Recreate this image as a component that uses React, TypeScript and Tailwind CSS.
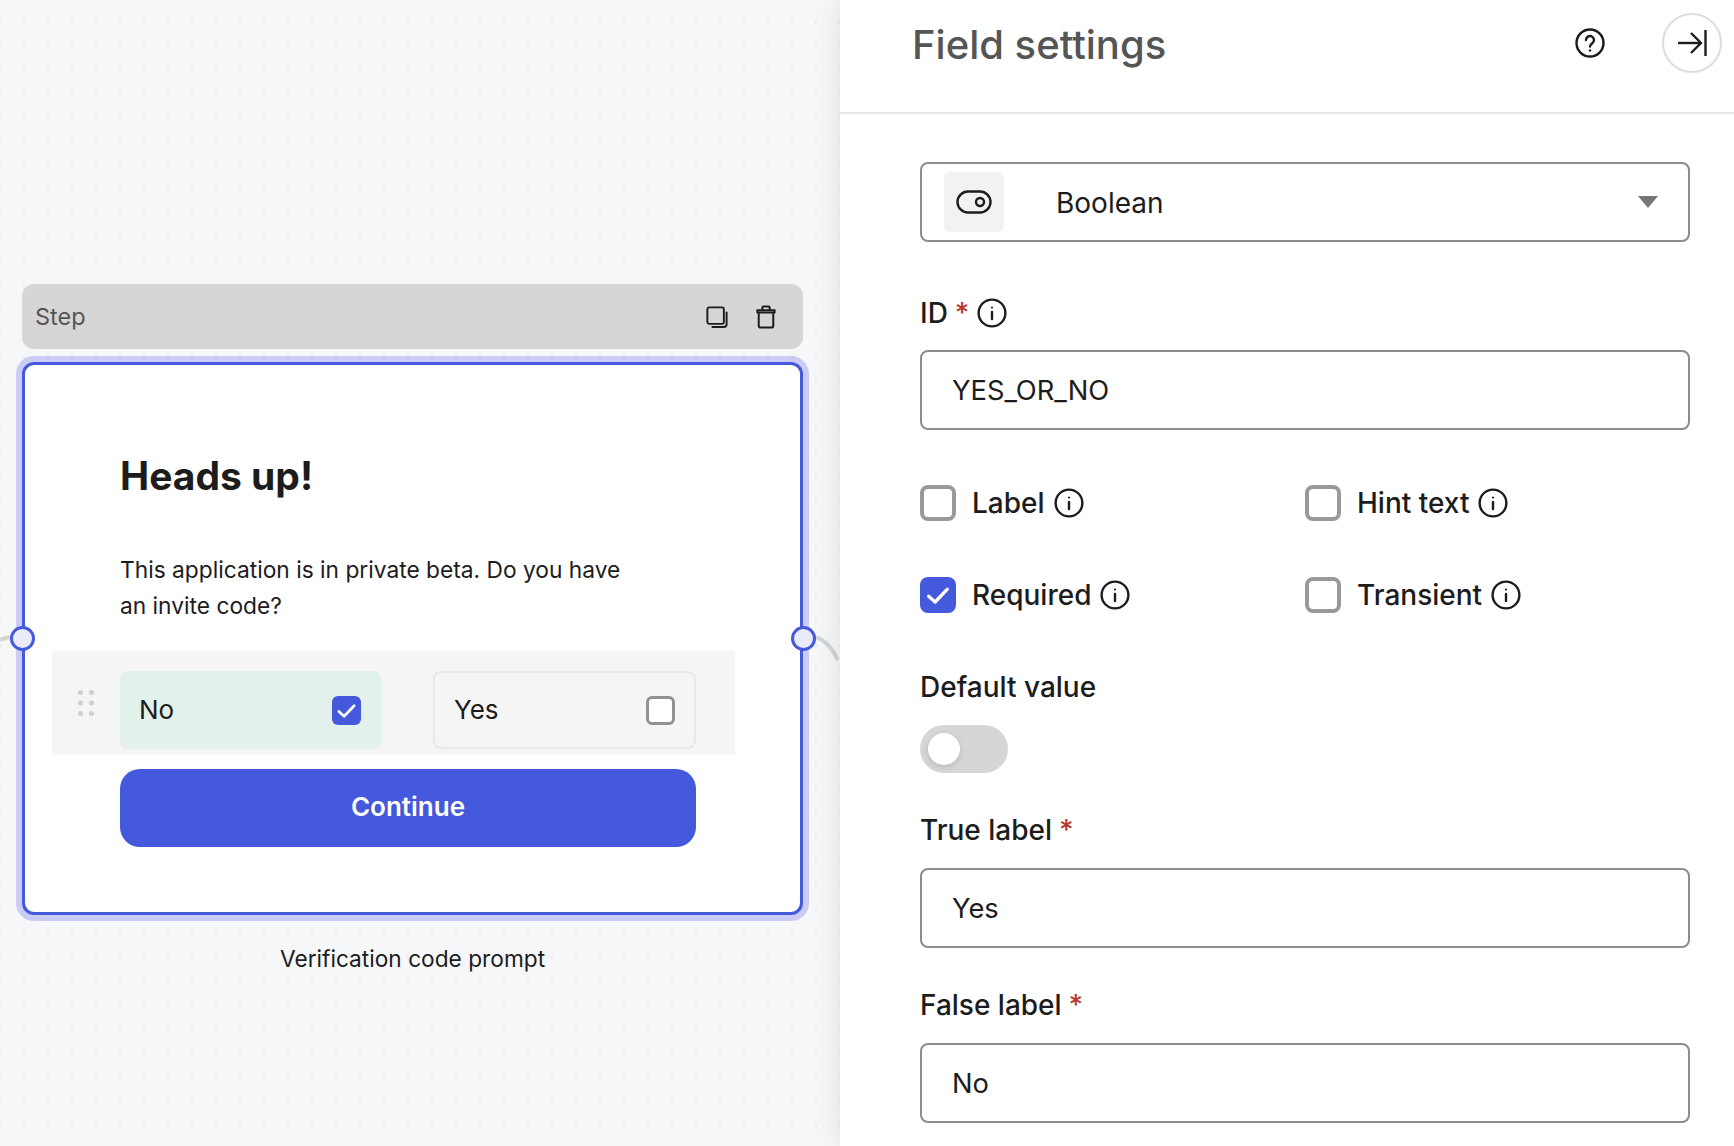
// Field settings editor: canvas preview on the left, settings panel on the right

function InfoIcon() {
  return (
    <svg width="30" height="30" viewBox="0 0 30 30" fill="none" stroke="#1c1c1c" strokeWidth="2.4" strokeLinecap="round" className="shrink-0">
      <circle cx="15" cy="15" r="13.4" />
      <path d="M15 14v7" />
      <circle cx="15" cy="9.5" r="1.1" fill="#1c1c1c" stroke="none" />
    </svg>
  );
}

function Check({ size }: { size: number }) {
  return (
    <svg width={size} height={size} viewBox="0 0 24 24" fill="none" stroke="#ffffff" strokeWidth="2.8" strokeLinecap="round" strokeLinejoin="round">
      <path d="M4 13l5.5 5L20 7" />
    </svg>
  );
}

function FieldLabel({ text, required, info }: { text: string; required?: boolean; info?: boolean }) {
  return (
    <div className="flex items-center h-8 text-[28px] leading-8 font-medium text-[#1c1c1c]">
      <span>{text}</span>
      {required && <span className="ml-[7px] text-[#b8352c]">*</span>}
      {info && <span className="ml-[8px] flex"><InfoIcon /></span>}
    </div>
  );
}

function TextInput({ value }: { value: string }) {
  return (
    <div className="flex items-center h-[80px] pl-[30px] pt-[2px] border-2 border-[#8c8c8c] rounded-lg text-[27.3px] text-[#1c1c1c]">
      {value}
    </div>
  );
}

function CheckOption({ label, checked }: { label: string; checked?: boolean }) {
  return (
    <div className="flex items-center h-9 w-[385px]">
      {checked ? (
        <div className="flex items-center justify-center w-9 h-9 rounded-lg bg-[#4459dc]">
          <Check size={28} />
        </div>
      ) : (
        <div className="w-9 h-9 rounded-lg border-4 border-[#999999]" />
      )}
      <span className="ml-[16px] text-[28px] font-medium text-[#1c1c1c]">{label}</span>
      <span className="ml-[9px] flex"><InfoIcon /></span>
    </div>
  );
}

function ChoiceCard({ label, selected }: { label: string; selected?: boolean }) {
  return (
    <div
      className={
        selected
          ? 'flex items-center justify-between w-[261px] h-[78px] pl-[19px] pr-5 rounded-lg bg-[#e3f1ec]'
          : 'flex items-center justify-between w-[263px] h-[78px] pl-[19px] pr-[19px] rounded-lg border-2 border-[#e8e8e8]'
      }
    >
      <span className="pb-[1px] text-[26px] text-[#1c1c1c]">{label}</span>
      {selected ? (
        <div className="flex items-center justify-center w-[29px] h-[29px] rounded-md bg-[#4459dc]">
          <Check size={23} />
        </div>
      ) : (
        <div className="w-[29px] h-[29px] rounded-md border-[3px] border-[#929292] bg-white" />
      )}
    </div>
  );
}

function DragHandle() {
  return (
    <svg width="16" height="26" viewBox="0 0 16 26" fill="#cfcfd2" className="shrink-0 -mt-[14px]">
      <circle cx="2.5" cy="2.5" r="2.5" />
      <circle cx="13.5" cy="2.5" r="2.5" />
      <circle cx="2.5" cy="13" r="2.5" />
      <circle cx="13.5" cy="13" r="2.5" />
      <circle cx="2.5" cy="23.5" r="2.5" />
      <circle cx="13.5" cy="23.5" r="2.5" />
    </svg>
  );
}

function CanvasPanel() {
  return (
    <div className="relative w-[840px] h-full pt-[284px] pl-[22px] bg-[#f6f7f9] bg-[radial-gradient(#eeeff2_1.6px,transparent_1.8px)] bg-[length:24px_24px] bg-[position:-12px_10px]">
      {/* connector stubs */}
      <svg width="840" height="700" className="absolute left-0 top-0" fill="none" stroke="#d4d4d4" strokeWidth="4">
        <path d="M0 640C4 638 8 637 12 637" />
        <path d="M812 637C824 637 832 648 838 660" />
      </svg>

      <div className="relative flex items-center justify-between w-[781px] h-[65px] pl-[13px] pr-[27px] rounded-xl bg-[#d6d6d6]">
        <span className="text-[23.5px] text-[#555555]">Step</span>
        <div className="flex items-center gap-[28px]">
          <svg width="22" height="22" viewBox="0 0 24 24" fill="none" stroke="#1c1c1c" strokeWidth="2.1" strokeLinejoin="round" strokeLinecap="round">
            <rect x="1.5" y="1.5" width="18" height="18" rx="2" />
            <path d="M22.5 7v13a3 3 0 0 1-3 3H7" />
          </svg>
          <svg width="20" height="24" viewBox="0 0 22 26" fill="none" stroke="#1c1c1c" strokeWidth="2.2" strokeLinejoin="round" strokeLinecap="round">
            <path d="M1.5 8V5.5h19V8" />
            <path d="M7 5V2.5a1 1 0 0 1 1-1h6a1 1 0 0 1 1 1V5" />
            <path d="M3 8h16v14.5a2 2 0 0 1-2 2H5a2 2 0 0 1-2-2z" />
          </svg>
        </div>
      </div>

      <div className="relative mt-[13px] w-[781px] h-[553px] pt-[87px] border-[3px] border-[#4459dc] rounded-xl bg-white shadow-[0_0_0_6px_rgba(90,90,235,0.27)]">
        <div className="absolute -left-[15.5px] top-[261px] w-[25px] h-[25px] rounded-full border-[3px] border-[#4459dc] bg-[#e9ebfa]" />
        <div className="absolute -right-[15.5px] top-[261px] w-[25px] h-[25px] rounded-full border-[3px] border-[#4459dc] bg-[#e9ebfa]" />

        <h1 className="ml-[95px] text-[39px] leading-[48px] font-bold text-[#1c1c1c]">Heads up!</h1>
        <p className="ml-[95px] mt-[52px] w-[530px] text-[22.75px] leading-9 text-[#1c1c1c]">
          This application is in private beta. Do you have an invite code?
        </p>

        <div className="flex items-center ml-[27px] mt-[27px] w-[683px] h-[104px] pl-[26px] pt-[14px] bg-[#f5f5f5]">
          <DragHandle />
          <div className="flex ml-[26px] gap-[52px]">
            <ChoiceCard label="No" selected />
            <ChoiceCard label="Yes" />
          </div>
        </div>

        <div className="flex items-center justify-center ml-[95px] mt-[14px] w-[576px] h-[78px] pb-[3px] rounded-[20px] bg-[#4459dc] text-[26px] font-semibold text-white">
          Continue
        </div>
      </div>

      <div className="mt-[28px] w-[781px] text-center text-[22.7px] leading-8 text-[#1c1c1c]">
        Verification code prompt
      </div>
    </div>
  );
}

function SettingsPanel() {
  return (
    <div className="relative flex-1 h-full bg-white shadow-[0_0_28px_rgba(0,0,0,0.1)]">
      <div className="relative flex items-center h-[114px] pl-[72px] pr-3 pb-[27px] border-b-2 border-[#e8e8e8]">
        <h2 className="pt-[4px] text-[40px] font-medium text-[#555555]">Field settings</h2>
        <svg width="30" height="30" viewBox="0 0 30 30" fill="none" stroke="#1c1c1c" strokeWidth="2.4" strokeLinecap="round" className="ml-auto">
          <circle cx="15" cy="15" r="13.5" />
          <path d="M11 12a4 4 0 1 1 6.3 3.3c-1.4 1-2.3 1.7-2.3 3.2" />
          <circle cx="15" cy="22.5" r="1.2" fill="#1c1c1c" stroke="none" />
        </svg>
        <div className="flex items-center justify-center ml-[57px] w-[60px] h-[60px] rounded-full border-2 border-[#dddddd]">
          <svg width="30" height="28" viewBox="0 0 30 28" fill="none" stroke="#1c1c1c" strokeWidth="2.4">
            <path d="M1 14h23" />
            <path d="M14 4l10 10-10 10" />
            <path d="M28.5 1v26" />
          </svg>
        </div>
      </div>

      <div className="pl-20 w-[850px]">
        <div className="flex items-center mt-12 h-[80px] pl-[22px] pr-[30px] border-2 border-[#8c8c8c] rounded-lg">
          <div className="flex items-center justify-center w-[60px] h-[60px] rounded-md bg-[#f2f2f2]">
            <svg width="36" height="24" viewBox="0 0 36 24" fill="none" stroke="#1c1c1c" strokeWidth="2.4">
              <rect x="1.5" y="1.5" width="33" height="21" rx="10.5" />
              <circle cx="24" cy="12" r="4" />
            </svg>
          </div>
          <span className="ml-[52px] pt-[2px] text-[28px] text-[#1c1c1c]">Boolean</span>
          <svg width="20" height="12" viewBox="0 0 20 12" fill="#777777" className="ml-auto">
            <path d="M0 0h20L10 12z" />
          </svg>
        </div>

        <div className="mt-[55px]">
          <FieldLabel text="ID" required info />
        </div>
        <div className="mt-[21px]">
          <TextInput value="YES_OR_NO" />
        </div>

        <div className="flex mt-[55px]">
          <CheckOption label="Label" />
          <CheckOption label="Hint text" />
        </div>
        <div className="flex mt-14">
          <CheckOption label="Required" checked />
          <CheckOption label="Transient" />
        </div>

        <div className="mt-[58px]">
          <FieldLabel text="Default value" />
        </div>
        <div className="relative mt-[22px] w-[88px] h-12 rounded-full bg-[#d6d6d6]">
          <div className="absolute left-2 top-2 w-8 h-8 rounded-full bg-white shadow-[0_2px_6px_rgba(0,0,0,0.15)]" />
        </div>

        <div className="mt-[41px]">
          <FieldLabel text="True label" required />
        </div>
        <div className="mt-[22px]">
          <TextInput value="Yes" />
        </div>

        <div className="mt-[41px]">
          <FieldLabel text="False label" required />
        </div>
        <div className="mt-[22px]">
          <TextInput value="No" />
        </div>
      </div>
    </div>
  );
}

export default function App() {
  return (
    <div className="flex w-[1734px] h-[1146px] overflow-hidden font-['Inter',sans-serif]">
      <CanvasPanel />
      <SettingsPanel />
    </div>
  );
}
